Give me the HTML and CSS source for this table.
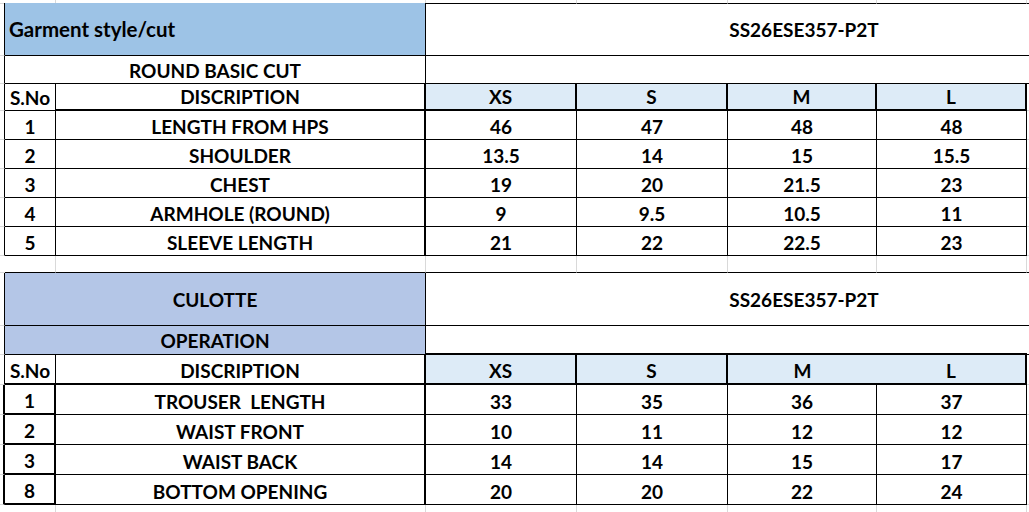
FILE: index.html
```html
<!DOCTYPE html>
<html lang="en">
<head>
<meta charset="utf-8">
<title>Garment spec sheet</title>
<link rel="stylesheet" href="styles.css">
</head>
<body>
<main class="sheet">
  <!-- r0 top sliver -->
  <div class="cell gb"></div>
  <div class="cell gr b1"></div>
  <div class="cell gr b1"></div>
  <div class="cell gr b1"></div>
  <div class="cell gr b1"></div>
  <div class="cell gr b1"></div>
  <div class="cell gr b1"></div>
  <div class="cell b1"></div>

  <!-- r1 title -->
  <div class="cell gb r1"></div>
  <div class="cell s2 r1 b1 mid left fill-title title">Garment style/cut</div>
  <div class="cell s5 b1 mid code">SS26ESE357-P2T</div>

  <!-- r2 -->
  <div class="cell gb r1"></div>
  <div class="cell s2 r1 b1">ROUND BASIC CUT</div>
  <div class="cell s5 b1"></div>

  <!-- r3 header -->
  <div class="cell gb r1"></div>
  <div class="cell r1 b1">S.No</div>
  <div class="cell r2 b2">DISCRIPTION</div>
  <div class="cell r2 b2 fill-hdr">XS</div>
  <div class="cell r2 b2 fill-hdr">S</div>
  <div class="cell r2 b2 fill-hdr">M</div>
  <div class="cell r2 b2 fill-hdr">L</div>
  <div class="cell gb"></div>

  <!-- data table 1 -->
  <div class="cell gb r1"></div>
  <div class="cell r1 b1">1</div>
  <div class="cell r2 b1">LENGTH FROM HPS</div>
  <div class="cell r1 b1">46</div>
  <div class="cell r1 b1">47</div>
  <div class="cell r1 b1">48</div>
  <div class="cell r1 b1">48</div>
  <div class="cell gb"></div>

  <div class="cell gb r1"></div>
  <div class="cell r1 b1">2</div>
  <div class="cell r2 b1">SHOULDER</div>
  <div class="cell r1 b1">13.5</div>
  <div class="cell r1 b1">14</div>
  <div class="cell r1 b1">15</div>
  <div class="cell r1 b1">15.5</div>
  <div class="cell gb"></div>

  <div class="cell gb r1"></div>
  <div class="cell r1 b1">3</div>
  <div class="cell r2 b1">CHEST</div>
  <div class="cell r1 b1">19</div>
  <div class="cell r1 b1">20</div>
  <div class="cell r1 b1">21.5</div>
  <div class="cell r1 b1">23</div>
  <div class="cell gb"></div>

  <div class="cell gb r1"></div>
  <div class="cell r1 b1">4</div>
  <div class="cell r2 b1">ARMHOLE (ROUND)</div>
  <div class="cell r1 b1">9</div>
  <div class="cell r1 b1">9.5</div>
  <div class="cell r1 b1">10.5</div>
  <div class="cell r1 b1">11</div>
  <div class="cell gb"></div>

  <div class="cell gb r1"></div>
  <div class="cell r1 b1">5</div>
  <div class="cell r2 b1">SLEEVE LENGTH</div>
  <div class="cell r1 b1">21</div>
  <div class="cell r1 b1">22</div>
  <div class="cell r1 b1">22.5</div>
  <div class="cell r1 b1">23</div>
  <div class="cell gb"></div>

  <!-- gap row -->
  <div class="cell gb"></div>
  <div class="cell gr b1"></div>
  <div class="cell gr b1"></div>
  <div class="cell gr b1"></div>
  <div class="cell gr b1"></div>
  <div class="cell gr b1"></div>
  <div class="cell gr b1"></div>
  <div class="cell b1"></div>

  <!-- culotte -->
  <div class="cell gb r1"></div>
  <div class="cell s2 r1 b1 mid fill-sec">CULOTTE</div>
  <div class="cell s5 b1 mid code">SS26ESE357-P2T</div>

  <div class="cell gb r1"></div>
  <div class="cell s2 r1 b1 mid fill-sec">OPERATION</div>
  <div class="cell s4 b2"></div>
  <div class="cell b1"></div>

  <!-- header table 2 -->
  <div class="cell gb r1"></div>
  <div class="cell r1 b2">S.No</div>
  <div class="cell r2 b2">DISCRIPTION</div>
  <div class="cell r2 b2 fill-hdr">XS</div>
  <div class="cell r2 b2 fill-hdr">S</div>
  <div class="cell b2 fill-hdr">M</div>
  <div class="cell r2 b2 fill-hdr">L</div>
  <div class="cell gb"></div>

  <!-- data table 2 -->
  <div class="cell gb r2"></div>
  <div class="cell r2 b2">1</div>
  <div class="cell r2 b1 pre">TROUSER  LENGTH</div>
  <div class="cell r1 b1">33</div>
  <div class="cell r1 b1">35</div>
  <div class="cell r1 b1">36</div>
  <div class="cell r1 b1">37</div>
  <div class="cell gb"></div>

  <div class="cell gb r2"></div>
  <div class="cell r2 b2">2</div>
  <div class="cell r2 b1">WAIST FRONT</div>
  <div class="cell r1 b1">10</div>
  <div class="cell r1 b1">11</div>
  <div class="cell r1 b1">12</div>
  <div class="cell r1 b1">12</div>
  <div class="cell gb"></div>

  <div class="cell gb r2"></div>
  <div class="cell r2 b2">3</div>
  <div class="cell r2 b1">WAIST BACK</div>
  <div class="cell r1 b1">14</div>
  <div class="cell r1 b1">14</div>
  <div class="cell r1 b1">15</div>
  <div class="cell r1 b1">17</div>
  <div class="cell gb"></div>

  <div class="cell gb r2"></div>
  <div class="cell r2 b2">8</div>
  <div class="cell r2 b1">BOTTOM OPENING</div>
  <div class="cell r1 b1">20</div>
  <div class="cell r1 b1">20</div>
  <div class="cell r1 b1">22</div>
  <div class="cell r1 b1">24</div>
  <div class="cell gb"></div>

  <!-- trailing row -->
  <div class="cell gb"></div>
  <div class="cell gr"></div>
  <div class="cell gr"></div>
  <div class="cell gr"></div>
  <div class="cell gr"></div>
  <div class="cell gr"></div>
  <div class="cell gr"></div>
  <div class="cell"></div>
</main>
</body>
</html>
```

FILE: styles.css
```css
html, body {
  margin: 0;
  padding: 0;
  background: #ffffff;
  overflow: hidden;
}

.sheet {
  display: grid;
  grid-template-columns: 5px 51px 370px 151px 151px 149px 150px 2px;
  grid-template-rows: 3px 53px 28px 27px repeat(5, 29px) 17px 53px 29px 30px repeat(4, 30px) 20px;
  width: 1029px;
  font-family: Lato, "Open Sans", sans-serif;
  font-weight: 700;
  font-size: 19px;
  color: #000000;
}

.cell {
  box-sizing: border-box;
  display: flex;
  align-items: flex-end;
  justify-content: center;
  line-height: 19px;
  padding-bottom: 3px;
  white-space: nowrap;
  min-width: 0;
}

.pre { white-space: pre; }

.mid {
  align-items: center;
  padding-bottom: 0;
}

.left {
  justify-content: flex-start;
  padding-left: 4px;
}

.title { font-size: 20.5px; }

.code { padding-left: 153px; }

.s2 { grid-column: span 2; }
.s4 { grid-column: span 4; }
.s5 { grid-column: span 5; }

.r1 { border-right: 1px solid #000000; }
.r2 { border-right: 2px solid #000000; }
.b1 { border-bottom: 1px solid #000000; }
.b2 { border-bottom: 2px solid #000000; }
.gr { border-right: 1px solid #d9d9d9; }
.gb { border-bottom: 1px solid #d9d9d9; }

.fill-title { background: #9dc3e6; }
.fill-sec { background: #b4c6e7; }
.fill-hdr { background: #ddebf7; }
```
